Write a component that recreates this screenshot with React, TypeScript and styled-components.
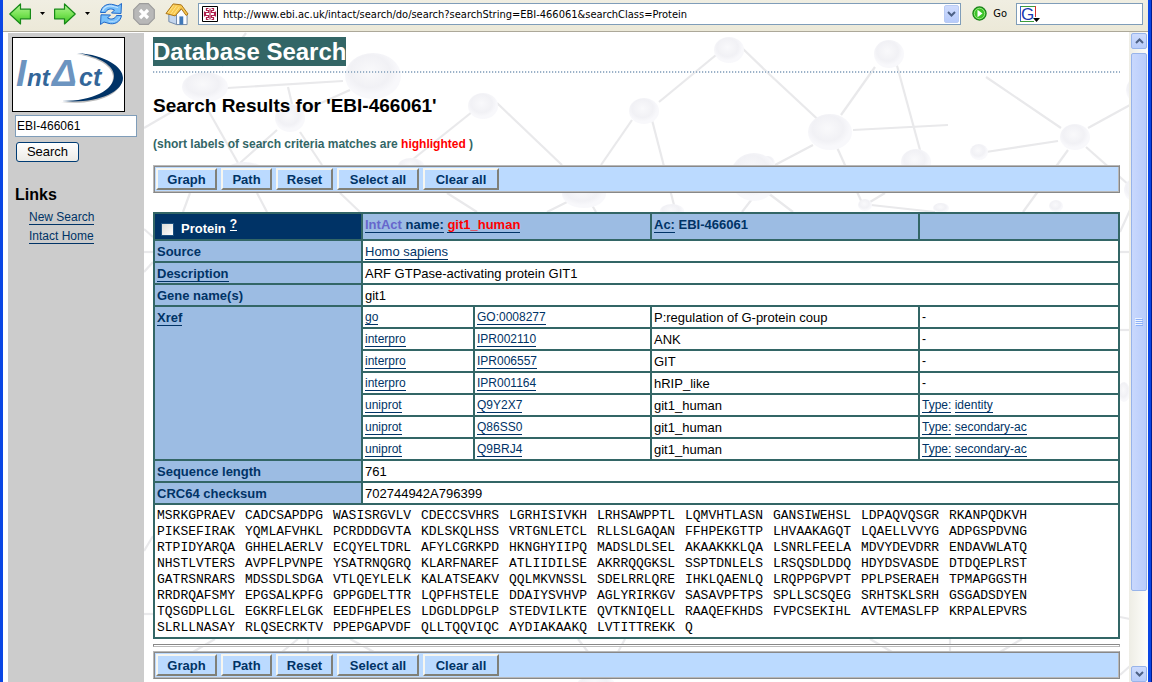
import React from "react";
import styled, { createGlobalStyle } from "styled-components";

const sans = '"Liberation Sans", Arial, Helvetica, sans-serif';
const chrome = '"DejaVu Sans Condensed", Tahoma, sans-serif';
const navy = "#003366";
const teal = "#336666";

const GlobalStyle = createGlobalStyle`
  * { box-sizing: border-box; }
  body { margin: 0; font-family: ${sans}; color: #000; background: #fff; }
`;

const Window = styled.div`
  display: flex;
  flex-direction: column;
  height: 100vh;
  overflow: hidden;
  padding: 0 3px;
  background: #0a46e4;
  border-right: 1px solid #001c90;
`;

const Toolbar = styled.header`
  display: flex;
  align-items: center;
  gap: 9px;
  flex: none;
  height: 32px;
  padding: 0 5px 4px 6px;
  background: linear-gradient(#f0eee2, #ece9d8);
  border-bottom: 1px solid #aca899;
`;

const IconButton = styled.button<{ $width: number }>`
  display: flex;
  flex: none;
  width: ${(p) => p.$width}px;
  height: 24px;
  padding: 0;
  border: 0;
  background: none;
  align-items: center;
  justify-content: center;
`;

const FieldBox = styled.div`
  display: flex;
  align-items: center;
  height: 22px;
  padding: 1px;
  background: #fff;
  border: 1px solid #7f9db9;
`;

const AddressBox = styled(FieldBox)`
  flex: 1;
  padding-left: 3px;
  gap: 5px;
`;

const SearchBox = styled(FieldBox)`
  flex: none;
  width: 127px;
  padding-left: 3px;
`;

const BareInput = styled.input`
  flex: 1;
  min-width: 0;
  padding: 2px 0 0;
  border: 0;
  outline: 0;
  background: none;
  font: 11px ${chrome};
  color: #000;
`;

const DropButton = styled.button`
  display: flex;
  align-items: center;
  justify-content: center;
  width: 15px;
  height: 18px;
  padding: 0;
  border: 1px solid #b9cbf3;
  border-radius: 2px;
  background: linear-gradient(#cfdcfd, #b7cbfa);
`;

const GoButton = styled.button`
  display: flex;
  align-items: center;
  gap: 6px;
  margin-left: 2px;
  padding: 0;
  border: 0;
  background: none;
  font: 11px ${chrome};
  color: #000;
`;

const Viewport = styled.div`
  display: flex;
  flex: 1;
  min-height: 0;
  position: relative;
  isolation: isolate;
  overflow: hidden;
  background: #fff;
`;

const Backdrop = styled.svg`
  position: absolute;
  left: 0;
  top: 0;
  z-index: -1;
`;

const Sidebar = styled.aside`
  flex: none;
  width: 136px;
  margin: 1px 0 0 5px;
  padding: 4px;
  background: #ccc;
`;

const LogoLink = styled.a`
  display: block;
  width: 113px;
  height: 75px;
  border: 1px solid #000;
  background: #fff;
`;

const QueryForm = styled.form`
  display: flex;
  flex-direction: column;
  align-items: flex-start;
  gap: 5px;
  margin: 3px 0 0 3px;
`;

const QueryInput = styled.input`
  width: 122px;
  height: 22px;
  padding: 0 1px;
  border: 1px solid #7f9db9;
  background: #fff;
  font: 12px ${sans};
  color: #000;
`;

const SubmitButton = styled.button`
  width: 63px;
  height: 20px;
  margin-left: 1px;
  padding: 0;
  border: 1px solid #003c74;
  border-radius: 3px;
  background: linear-gradient(#fff, #ecebe6);
  font: 13px/16px ${sans};
  color: #000;
`;

const SideHeading = styled.h3`
  margin: 24px 0 0 3px;
  font-size: 16px;
  line-height: 18px;
`;

const SideLinks = styled.ul`
  display: flex;
  flex-direction: column;
  align-items: flex-start;
  gap: 4px;
  margin: 6px 0 0 17px;
  padding: 0;
  list-style: none;
  font-size: 12px;
  line-height: 14px;
`;

const TextLink = styled.a`
  display: inline-block;
  color: ${navy};
  text-decoration: none;
  line-height: 14px;
  border-bottom: 1px solid currentColor;
`;

const Main = styled.main`
  flex: 1;
  min-width: 0;
  overflow: hidden;
  padding: 5px 9px 0;
`;

const Title = styled.h1`
  width: fit-content;
  margin: 0;
  background: ${teal};
  color: #fff;
  font-size: 24px;
  line-height: 29px;
`;

const DottedRule = styled.div`
  height: 2px;
  margin-top: 5px;
  background: repeating-linear-gradient(90deg, #9cb2c8 0 1px, #e6ecf2 1px 2px, transparent 2px 3px);
`;

const ResultHeading = styled.h2`
  margin: 21px 0 0;
  font-size: 19px;
  line-height: 24px;
`;

const Note = styled.p`
  margin: 18px 0 13px;
  font-size: 12px;
  font-weight: bold;
  line-height: 16px;
  color: ${teal};
`;

const Match = styled.span`
  color: #f00;
`;

const ActionBar = styled.div`
  display: flex;
  gap: 4px;
  height: 28px;
  padding: 2px;
  background: #bbdaff;
  border: 1px solid;
  border-color: #b8b8b8 #888 #888 #b8b8b8;
  box-shadow: inset 1px 1px #888, inset -1px -1px #b8b8b8;
`;

const ActionButton = styled.button<{ $width: number }>`
  width: ${(p) => p.$width}px;
  height: 22px;
  padding: 2px 0 0;
  background: #bbdaff;
  border: 2px solid;
  border-color: #f6f6f0 #808078 #808078 #f6f6f0;
  font: bold 13px/16px ${sans};
  color: ${navy};
`;

const ProteinTable = styled.table`
  width: 100%;
  margin: 19px 0 5px;
  table-layout: fixed;
  border-collapse: collapse;
  font-size: 13px;
  line-height: 18px;
  background: #fff;
`;

const Col = styled.col<{ $width?: number }>`
  width: ${(p) => (p.$width ? `${p.$width}px` : "auto")};
`;

const Cell = styled.td<{ $small?: boolean }>`
  padding: ${(p) => (p.$small ? 0 : 2)}px 2px 0;
  border: 2px solid ${teal};
  font-size: ${(p) => (p.$small ? 12 : 13)}px;
  line-height: ${(p) => (p.$small ? 20 : 18)}px;
  vertical-align: top;
  white-space: nowrap;
`;

const HeadCell = styled.th`
  height: 27px;
  padding: 2px 2px 0;
  border: 2px solid ${teal};
  background: #9cbce3;
  color: ${navy};
  text-align: left;
  vertical-align: top;
`;

const LabelCell = styled(HeadCell)`
  height: 22px;
`;

const ProteinCell = styled(HeadCell)`
  background: ${navy};
  color: #fff;
`;

const ProteinLabel = styled.div`
  display: flex;
  align-items: center;
  gap: 7px;
  padding: 4px 4px 0;
`;

const Tick = styled.input`
  appearance: none;
  flex: none;
  width: 13px;
  height: 13px;
  margin: 0;
  border: 1px solid #1c5180;
  background: linear-gradient(135deg, #dcdcd7, #fff);
`;

const HelpLink = styled.a`
  display: block;
  width: 7px;
  margin: -9px 0 0 -3px;
  border-bottom: 1px solid #fff;
  color: #fff;
  font-size: 12px;
  line-height: 12px;
  text-decoration: none;
`;

const Brand = styled.span`
  color: #6666cc;
`;

const Sequence = styled.div`
  display: grid;
  grid-template-columns: repeat(10, 88px);
  padding: 1px 0;
  font: 13px/16px "Liberation Mono", "Courier New", monospace;
`;

const Rule = styled.hr`
  height: 3px;
  margin: 0 0 4px;
  border: 1px solid;
  border-color: #888 #aaa #bbb #888;
  background: #fff;
`;

const ScrollTrack = styled.div`
  display: flex;
  flex-direction: column;
  flex: none;
  width: 19px;
  padding: 1px 1px 0 2px;
  background: linear-gradient(90deg, #eeede5, #fefefb);
`;

const ScrollButton = styled.button`
  display: flex;
  align-items: center;
  justify-content: center;
  flex: none;
  width: 16px;
  height: 16px;
  padding: 0;
  border: 1px solid #98b4ea;
  border-radius: 2px;
  background: linear-gradient(#cddbfd, #b8ccfa);
`;

const ScrollThumb = styled.div`
  display: flex;
  align-items: center;
  justify-content: center;
  width: 16px;
  flex: 538;
  margin-top: 4px;
  border: 1px solid #98b4ea;
  border-radius: 2px;
  background: linear-gradient(90deg, #c9d8fd, #b9cdfb);
`;

const ScrollRest = styled.div`
  flex: 75;
`;

type Line = [number, number, number, number];
type Ball = [number, number, number, number];

const bonds: Line[] = [
  [227, 88, 343, 81], [288, 87, 292, 104], [301, 112, 350, 90], [208, 110, 238, 163],
  [277, 130, 240, 163], [300, 132, 322, 165], [144, 128, 187, 103], [246, 33, 222, 66],
  [875, 67, 841, 115], [768, 73, 826, 127], [853, 130, 948, 125], [896, 62, 920, 150],
  [813, 145, 775, 165], [835, 143, 863, 205], [986, 77, 1061, 128], [1088, 128, 1130, 105],
  [986, 152, 1058, 141], [1068, 150, 1023, 212], [1086, 147, 1130, 186], [870, 202, 885, 193],
  [871, 205, 935, 212], [768, 193, 793, 212], [472, 112, 412, 160], [497, 103, 562, 165],
  [632, 120, 601, 165], [652, 120, 674, 205], [659, 102, 716, 55], [741, 47, 768, 73],
  [447, 193, 477, 212], [567, 202, 547, 212], [589, 200, 596, 212], [752, 199, 742, 212],
  [190, 193, 183, 212], [257, 193, 267, 212], [340, 193, 360, 212], [144, 229, 153, 237],
  [144, 252, 153, 252], [144, 272, 153, 262], [144, 551, 153, 536], [144, 614, 153, 614],
  [215, 639, 193, 652], [298, 639, 272, 660], [308, 639, 308, 652], [350, 639, 374, 652],
  [578, 639, 588, 652], [625, 639, 618, 652], [870, 639, 892, 652], [950, 639, 950, 652],
  [1022, 639, 1000, 652], [1120, 232, 1130, 210], [1120, 252, 1130, 252],
  [1120, 330, 1130, 330], [1120, 617, 1130, 619], [1120, 675, 1130, 666],
];

const balls: Ball[] = [
  [205, 87, 23, 15], [373, 76, 28, 23], [290, 118, 15, 14], [889, 54, 15, 14],
  [830, 132, 22, 18], [916, 162, 15, 13], [768, 163, 7, 7], [1075, 137, 15, 13],
  [979, 152, 9, 8], [1056, 206, 7, 6], [865, 205, 7, 6], [941, 208, 8, 5],
  [483, 106, 15, 13], [411, 166, 13, 8], [644, 111, 15, 13], [729, 50, 15, 13],
  [754, 177, 24, 24], [584, 194, 22, 14], [672, 211, 12, 7], [245, 170, 18, 8],
  [1136, 90, 10, 12], [1136, 190, 12, 12], [1124, 392, 6, 10], [596, 682, 18, 5],
];

const Molecules = () => (
  <Backdrop width="1145" height="650" viewBox="3 32 1145 650" aria-hidden="true">
    <defs>
      <radialGradient id="ball" cx="45%" cy="40%">
        <stop offset="0" stopColor="#f9f9fb" />
        <stop offset="0.7" stopColor="#f1f1f5" />
        <stop offset="1" stopColor="#f8f8fb" />
      </radialGradient>
    </defs>
    <g stroke="#e9e9eb" strokeWidth="2.2">
      {bonds.map(([a, b, c, d], i) => (
        <line key={i} x1={a} y1={b} x2={c} y2={d} />
      ))}
    </g>
    {balls.map(([x, y, rx, ry], i) => (
      <ellipse key={i} cx={x} cy={y} rx={rx} ry={ry} fill="url(#ball)" />
    ))}
  </Backdrop>
);

const Arrow = ({ flip }: { flip?: boolean }) => (
  <svg width="22" height="22" viewBox="0 0 22 22">
    <defs>
      <linearGradient id="green" x1="0" y1="0" x2="0" y2="1">
        <stop offset="0" stopColor="#b4f498" />
        <stop offset="0.5" stopColor="#7ce458" />
        <stop offset="1" stopColor="#40c424" />
      </linearGradient>
    </defs>
    <path
      transform={flip ? "matrix(-1 0 0 1 22 0)" : undefined}
      d="M.8 11 11.5 1v5.2H21.4v9.6H11.5V21z"
      fill="url(#green)"
      stroke="#178a17"
      strokeWidth="1.2"
      strokeLinejoin="round"
    />
  </svg>
);

const Caret = () => (
  <svg width="5" height="3" viewBox="0 0 5 3">
    <path d="M0 0h5L2.5 3z" fill="#000" />
  </svg>
);

const Reload = () => (
  <svg width="24" height="24" viewBox="0 0 24 24">
    <g fill="#78c0fa" stroke="#2068c8" strokeWidth="1" strokeLinejoin="round">
      <path d="M1.500 10.500C2.500 4 8.500.8 15 2.800L19 4 22.500 1.500 22 11.500 12.500 11 15.500 8C11.500 6 8 7 6.500 10.500z" />
      <path d="M22.500 13.500C21.500 20 15.500 23.200 9 21.200L5 20 1.500 22.500 2 12.800 11.500 13 8.500 16C12.500 18 16 17 17.500 13.500z" />
    </g>
    <path d="M3.500 9C5 4.500 10 2.800 15 4.500L19 5.500" fill="none" stroke="#c4e4ff" strokeWidth="1.200" />
    <path d="M20.500 15C19 19 14 20.500 9.500 19" fill="none" stroke="#b0d8ff" strokeWidth="1" />
  </svg>
);

const Stop = () => (
  <svg width="22" height="22" viewBox="0 0 22 22">
    <path d="M6.700.700h8.600l6 6v8.600l-6 6H6.700l-6-6V6.700z" fill="#b8b8b8" stroke="#9c9c9c" strokeWidth="1.200" />
    <path d="M7 7l8 8M15 7l-8 8" stroke="#fff" strokeWidth="3.200" />
  </svg>
);

const Home = () => (
  <svg width="25" height="24" viewBox="0 0 25 24">
    <path d="M4 11 8 6l10 5.500V23H12L4 20z" fill="#c4d6ee" stroke="#7088a8" />
    <path d="M12 12l6-6 5 6v11H12z" fill="#fafcff" stroke="#7088a8" />
    <path d="M15 14.500h4V23h-4z" fill="#3f78b8" />
    <path d="M1 11.500 8.500 1.500 17 2.500 24 12 22 13.500 17 6.500 10.500 14z" fill="#f8c850" stroke="#a87010" strokeLinejoin="round" />
    <path d="M3 11 9 3M6 12l6-8.500M9 12.500l6-8" stroke="#fde58c" strokeWidth="1" />
  </svg>
);

const SiteIcon = () => (
  <svg width="16" height="16" viewBox="0 0 16 16">
    <path d="M.500.500h15v15H.500z" fill="#fff" stroke="#000" />
    <g fill="none" stroke="#b0204c" strokeWidth="1.200">
      <path d="M8 2.500v11" />
      <path d="M6.500 2.500H4.500v2h2v2h-3v3h3v2h-2v2h2M9.500 2.500h2v2h-2v2h3v3h-3v2h2v2h-2" />
      <path d="M2.500 5.500v5M13.500 5.500v5" />
    </g>
  </svg>
);

const Chevron = ({ up }: { up?: boolean }) => (
  <svg width="9" height="6" viewBox="0 0 9 6">
    <path d={up ? "M1 5 4.500 1.500 8 5" : "M1 1l3.500 3.500L8 1"} fill="none" stroke="#4d6185" strokeWidth="2" />
  </svg>
);

const PlayIcon = () => (
  <svg width="15" height="15" viewBox="0 0 15 15">
    <circle cx="7.500" cy="7.500" r="6.600" fill="#3cc428" stroke="#188018" strokeWidth="1.200" />
    <circle cx="7.500" cy="7.500" r="5.200" fill="none" stroke="#a8ec90" strokeWidth=".8" />
    <path d="M5.500 3.800v7.400l5-3.700z" fill="#fff" />
  </svg>
);

const EngineIcon = () => (
  <svg width="21" height="18" viewBox="0 0 21 18">
    <path d="M.500 16V1.500H15" fill="none" stroke="#3c9c3c" />
    <path d="M.500 1v15.500" stroke="#3060d0" />
    <path d="M15.500 1v11" stroke="#d83030" />
    <path d="M0 16.500h14" stroke="#3c9c3c" />
    <text x="1" y="15" fontFamily={sans} fontSize="17" fill="#1838b0">G</text>
    <path d="M13 13h7l-3.500 4z" fill="#000" />
  </svg>
);

const IntActLogo = () => (
  <svg width="111" height="73" viewBox="0 0 111 73" role="img" aria-label="IntAct">
    <path d="M64 15C93 17 111 29 110 41C109 56 82 67 49 63C80 63 101 53 101 38C101 28 88 19 64 15z" fill="#bbb" transform="translate(-1 1)" />
    <path d="M64 15C93 17 110 29 110 40C110 55 82 66 49 63C80 63 101 52 101 38C101 28 88 19 64 15z" fill="#003366" />
    <g fontFamily={sans} fontStyle="italic" fontWeight="bold">
      <text x="3" y="48" fontSize="37" fill="#6c94c0">I</text>
      <text x="14" y="48" fontSize="24" fill="#336699">nt</text>
      <text x="39" y="48" fontSize="37" fill="#6c94c0">Δ</text>
      <text x="66" y="48" fontSize="25" fill="#336699">ct</text>
    </g>
  </svg>
);

const actions: [string, number][] = [
  ["Graph", 61], ["Path", 51], ["Reset", 57], ["Select all", 82], ["Clear all", 76],
];

const Actions = () => (
  <ActionBar>
    {actions.map(([label, width]) => (
      <ActionButton key={label} type="button" $width={width}>{label}</ActionButton>
    ))}
  </ActionBar>
);

const xrefs: [string, string, string, string][] = [
  ["go", "GO:0008277", "P:regulation of G-protein coup", ""],
  ["interpro", "IPR002110", "ANK", ""],
  ["interpro", "IPR006557", "GIT", ""],
  ["interpro", "IPR001164", "hRIP_like", ""],
  ["uniprot", "Q9Y2X7", "git1_human", "identity"],
  ["uniprot", "Q86SS0", "git1_human", "secondary-ac"],
  ["uniprot", "Q9BRJ4", "git1_human", "secondary-ac"],
];

const sequence = `
MSRKGPRAEV CADCSAPDPG WASISRGVLV CDECCSVHRS LGRHISIVKH LRHSAWPPTL LQMVHTLASN GANSIWEHSL LDPAQVQSGR RKANPQDKVH
PIKSEFIRAK YQMLAFVHKL PCRDDDGVTA KDLSKQLHSS VRTGNLETCL RLLSLGAQAN FFHPEKGTTP LHVAAKAGQT LQAELLVVYG ADPGSPDVNG
RTPIDYARQA GHHELAERLV ECQYELTDRL AFYLCGRKPD HKNGHYIIPQ MADSLDLSEL AKAAKKKLQA LSNRLFEELA MDVYDEVDRR ENDAVWLATQ
NHSTLVTERS AVPFLPVNPE YSATRNQGRQ KLARFNAREF ATLIIDILSE AKRRQQGKSL SSPTDNLELS LRSQSDLDDQ HDYDSVASDE DTDQEPLRST
GATRSNRARS MDSSDLSDGA VTLQEYLELK KALATSEAKV QQLMKVNSSL SDELRRLQRE IHKLQAENLQ LRQPPGPVPT PPLPSERAEH TPMAPGGSTH
RRDRQAFSMY EPGSALKPFG GPPGDELTTR LQPFHSTELE DDAIYSVHVP AGLYRIRKGV SASAVPFTPS SPLLSCSQEG SRHTSKLSRH GSGADSDYEN
TQSGDPLLGL EGKRFLELGK EEDFHPELES LDGDLDPGLP STEDVILKTE QVTKNIQELL RAAQEFKHDS FVPCSEKIHL AVTEMASLFP KRPALEPVRS
SLRLLNASAY RLQSECRKTV PPEPGAPVDF QLLTQQVIQC AYDIAKAAKQ LVTITTREKK Q
`.trim().split(/\s+/);

export default function App() {
  return (
    <Window>
      <GlobalStyle />
      <Toolbar>
        <IconButton $width={22} type="button" aria-label="Back"><Arrow /></IconButton>
        <IconButton $width={5} type="button" aria-label="Back history"><Caret /></IconButton>
        <IconButton $width={22} type="button" aria-label="Forward"><Arrow flip /></IconButton>
        <IconButton $width={5} type="button" aria-label="Forward history"><Caret /></IconButton>
        <IconButton $width={24} type="button" aria-label="Reload"><Reload /></IconButton>
        <IconButton $width={24} type="button" aria-label="Stop"><Stop /></IconButton>
        <IconButton $width={24} type="button" aria-label="Home"><Home /></IconButton>
        <AddressBox>
          <SiteIcon />
          <BareInput
            aria-label="Address"
            defaultValue="http://www.ebi.ac.uk/intact/search/do/search?searchString=EBI-466061&searchClass=Protein"
          />
          <DropButton type="button" aria-label="Show history"><Chevron /></DropButton>
        </AddressBox>
        <GoButton type="button"><PlayIcon />Go</GoButton>
        <SearchBox>
          <EngineIcon />
          <BareInput aria-label="Web search" />
        </SearchBox>
      </Toolbar>

      <Viewport>
        <Molecules />
        <Sidebar>
          <LogoLink href="#home"><IntActLogo /></LogoLink>
          <QueryForm>
            <QueryInput aria-label="Search IntAct" defaultValue="EBI-466061" />
            <SubmitButton type="button">Search</SubmitButton>
          </QueryForm>
          <SideHeading>Links</SideHeading>
          <SideLinks>
            <li><TextLink href="#new">New Search</TextLink></li>
            <li><TextLink href="#home">Intact Home</TextLink></li>
          </SideLinks>
        </Sidebar>

        <Main>
          <Title>Database Search</Title>
          <DottedRule />
          <ResultHeading>Search Results for 'EBI-466061'</ResultHeading>
          <Note>(short labels of search criteria matches are <Match>highlighted</Match> )</Note>
          <Actions />

          <ProteinTable>
            <colgroup>
              <Col $width={208} />
              <Col $width={112} />
              <Col $width={177} />
              <Col $width={268} />
              <Col />
            </colgroup>
            <tbody>
              <tr>
                <ProteinCell scope="col">
                  <ProteinLabel>
                    <Tick type="checkbox" id="protein" />
                    <label htmlFor="protein">Protein</label>
                    <HelpLink href="#help">?</HelpLink>
                  </ProteinLabel>
                </ProteinCell>
                <HeadCell colSpan={2}>
                  <TextLink href="#name"><Brand>IntAct</Brand> name:</TextLink>{" "}
                  <TextLink href="#git1"><Match>git1_human</Match></TextLink>
                </HeadCell>
                <HeadCell><TextLink href="#ac">Ac:</TextLink> EBI-466061</HeadCell>
                <HeadCell />
              </tr>
              <tr>
                <LabelCell scope="row">Source</LabelCell>
                <Cell colSpan={4}><TextLink href="#source">Homo sapiens</TextLink></Cell>
              </tr>
              <tr>
                <LabelCell scope="row"><TextLink href="#description">Description</TextLink></LabelCell>
                <Cell colSpan={4}>ARF GTPase-activating protein GIT1</Cell>
              </tr>
              <tr>
                <LabelCell scope="row">Gene name(s)</LabelCell>
                <Cell colSpan={4}>git1</Cell>
              </tr>
              {xrefs.map(([db, id, name, type], i) => (
                <tr key={id}>
                  {i === 0 && (
                    <LabelCell scope="rowgroup" rowSpan={xrefs.length}>
                      <TextLink href="#xref">Xref</TextLink>
                    </LabelCell>
                  )}
                  <Cell $small><TextLink href={`#${db}`}>{db}</TextLink></Cell>
                  <Cell $small><TextLink href={`#${id}`}>{id}</TextLink></Cell>
                  <Cell>{name}</Cell>
                  <Cell $small>
                    {type ? (
                      <>
                        <TextLink href="#type">Type:</TextLink>{" "}
                        <TextLink href={`#${type}`}>{type}</TextLink>
                      </>
                    ) : (
                      "-"
                    )}
                  </Cell>
                </tr>
              ))}
              <tr>
                <LabelCell scope="row">Sequence length</LabelCell>
                <Cell colSpan={4}>761</Cell>
              </tr>
              <tr>
                <LabelCell scope="row">CRC64 checksum</LabelCell>
                <Cell colSpan={4}>702744942A796399</Cell>
              </tr>
              <tr>
                <Cell colSpan={5}>
                  <Sequence>
                    {sequence.map((block, i) => (
                      <span key={i}>{block}</span>
                    ))}
                  </Sequence>
                </Cell>
              </tr>
            </tbody>
          </ProteinTable>

          <Rule />
          <Actions />
        </Main>

        <ScrollTrack>
          <ScrollButton type="button" aria-label="Scroll up"><Chevron up /></ScrollButton>
          <ScrollThumb>
            <svg width="8" height="8" viewBox="0 0 8 8">
              <path d="M0 .500h7M0 2.500h7M0 4.500h7M0 6.500h7" stroke="#eef4fe" />
              <path d="M1 1.500h7M1 3.500h7M1 5.500h7M1 7.500h7" stroke="#8cb0f8" />
            </svg>
          </ScrollThumb>
          <ScrollRest />
          <ScrollButton type="button" aria-label="Scroll down"><Chevron /></ScrollButton>
        </ScrollTrack>
      </Viewport>
    </Window>
  );
}
